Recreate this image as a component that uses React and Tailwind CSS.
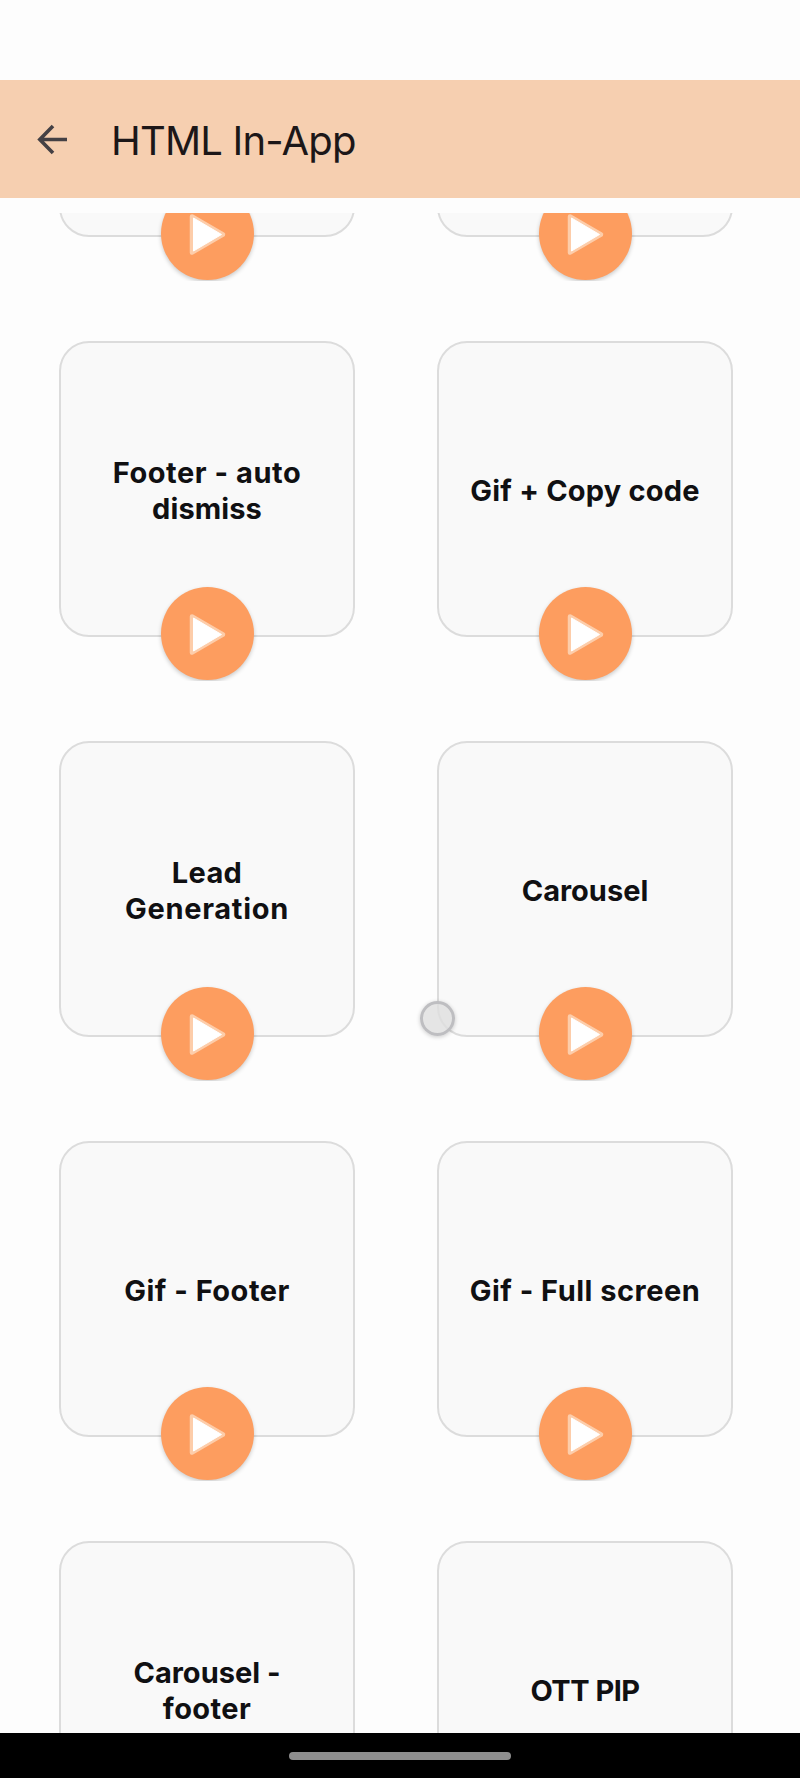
const rows = [
  [[], []],
  [
    [['Footer - auto', 'tracking-[0.550px]'], ['dismiss', 'tracking-[0.100px]']],
    [['Gif + Copy code', 'tracking-[0.200px]']],
  ],
  [
    [['Lead', 'tracking-[0.300px]'], ['Generation', 'tracking-[0.700px]']],
    [['Carousel', 'tracking-[0px]']],
  ],
  [
    [['Gif - Footer', 'tracking-[0.500px]']],
    [['Gif - Full screen', 'tracking-[0.500px]']],
  ],
  [
    [['Carousel -', 'tracking-[0px]'], ['footer', 'tracking-[0.400px]']],
    [['OTT PIP', 'tracking-[-0.500px]']],
  ],
];

function PlayButton() {
  return (
    <button
      aria-label="Play"
      className="absolute left-[99.5px] top-[244px] flex size-[93px] items-center justify-center rounded-full bg-[#fd9d5f] shadow-[0_2px_4px_rgba(0,0,0,0.2)] [clip-path:inset(-6px_-6px_-1px_-6px)]"
    >
      <svg viewBox="0 0 93 93" className="size-[93px]">
        <path d="M31 29.500 L62 47.500 L31 65.500 Z" fill="#fdcdaa" stroke="#fdcdaa" strokeWidth="4.500" strokeLinejoin="round" />
        <path d="M32.500 31 L60.500 47.500 L32.500 64 Z" fill="#fff" stroke="#fff" strokeWidth="1" strokeLinejoin="round" />
      </svg>
    </button>
  );
}

function Card({ lines }) {
  return (
    <div className="relative flex h-[296px] w-[296px] flex-col items-center justify-center rounded-[30px] border-2 border-[#dcdcdc] bg-[#f9f9f9] pt-[3px] text-[29px] leading-[36px] font-bold whitespace-nowrap text-[#101012]">
      {lines.map(([text, tracking]) => (
        <span key={text} className={tracking}>{text}</span>
      ))}
      <PlayButton />
    </div>
  );
}

export default function App() {
  return (
    <div className="relative flex h-[1778px] w-[800px] flex-col overflow-hidden bg-[#fdfdfd] font-['Inter',sans-serif]">
      <div className="h-20 shrink-0" />
      <header className="flex h-[118px] shrink-0 items-center bg-[#f6cfb0]">
        <svg viewBox="0 0 32 32" className="ml-9 size-8" fill="none" stroke="#444044" strokeWidth="3.600">
          <path d="M31 16.500 H4 M17 3 L3.800 16.500 L17 30" />
        </svg>
        <h1 className="ml-[43px] pt-1 text-[40px] font-normal tracking-[-0.800px] text-[#1c1718]">HTML In-App</h1>
      </header>
      <div className="h-[15px] shrink-0" />
      <main className="min-h-0 flex-1 overflow-hidden">
        <div className="-mt-[272px] grid grid-cols-[296px_296px] gap-x-[82px] gap-y-[104px] pl-[59px]">
          {rows.flat().map((lines, i) => (
            <Card key={i} lines={lines} />
          ))}
        </div>
      </main>
      <footer className="flex h-[45px] shrink-0 justify-center bg-black pt-[19px]">
        <div className="h-2 w-[222px] rounded-full bg-[#8e8e8e]" />
      </footer>
      <div className="absolute left-[420px] top-[1001px] size-[35px] rounded-full border-[3px] border-[#b9b9bd]/90 bg-[#dedede]/80 shadow-[0_1px_4px_rgba(0,0,0,0.2)]" />
    </div>
  );
}
